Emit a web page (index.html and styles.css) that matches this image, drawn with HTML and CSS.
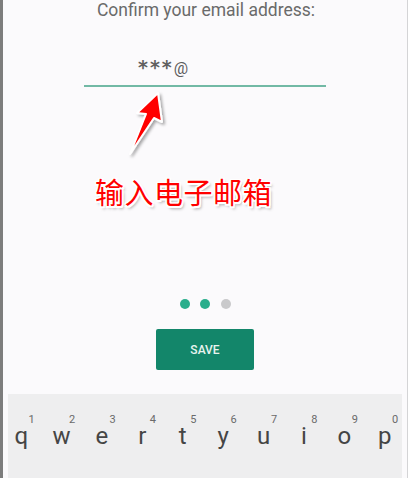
FILE: index.html
```html
<!DOCTYPE html>
<html lang="en">
<head>
<meta charset="utf-8">
<link rel="stylesheet" href="styles.css">
</head>
<body>
<div class="screen">
  <h1 class="title">Confirm your email address:</h1>
  <div class="field">
    <span class="field-text"><span class="stars">***</span>@</span>
  </div>
  <div class="spacer"></div>
  <div class="dots">
    <span class="dot on"></span>
    <span class="dot on"></span>
    <span class="dot"></span>
  </div>
  <button class="save">SAVE</button>
  <div class="keyboard">
    <div class="keyrow">
      <div class="key"><span class="num">1</span><span class="letter">q</span></div>
      <div class="key"><span class="num">2</span><span class="letter">w</span></div>
      <div class="key"><span class="num">3</span><span class="letter">e</span></div>
      <div class="key"><span class="num">4</span><span class="letter">r</span></div>
      <div class="key"><span class="num">5</span><span class="letter">t</span></div>
      <div class="key"><span class="num">6</span><span class="letter">y</span></div>
      <div class="key"><span class="num">7</span><span class="letter">u</span></div>
      <div class="key"><span class="num">8</span><span class="letter">i</span></div>
      <div class="key"><span class="num">9</span><span class="letter">o</span></div>
      <div class="key"><span class="num">0</span><span class="letter">p</span></div>
    </div>
  </div>

  <svg class="arrow" width="60" height="80" viewBox="120 88 60 80">
    <defs>
      <filter id="sh" x="-30%" y="-30%" width="160%" height="160%">
        <feDropShadow dx="2" dy="2" stdDeviation="1.5" flood-color="#000" flood-opacity="0.35"/>
      </filter>
    </defs>
    <polygon points="158,93 162,122 154,118 130,154 146,114 137,113" fill="#ff0000" stroke="#ffffff" stroke-width="2" stroke-linejoin="round" filter="url(#sh)"/>
  </svg>
  <div class="note">输入电子邮箱</div>
</div>
</body>
</html>
```

FILE: styles.css
```css
html, body {
  margin: 0;
  padding: 0;
  background: #fbfafc;
}

.screen {
  position: relative;
  width: 408px;
  height: 478px;
  box-sizing: border-box;
  border-left: 3px solid #7d7d7d;
  border-right: 1px solid #d4d4d6;
  display: flex;
  flex-direction: column;
  overflow: hidden;
  font-family: Roboto, "Liberation Sans", sans-serif;
}

.title {
  margin: 0;
  font-size: 17.5px;
  font-weight: 400;
  line-height: 20px;
  color: #6a6a6a;
  text-align: center;
  padding-left: 2px;
}

.field {
  margin: 33px 0 0 81px;
  width: 242px;
  height: 34px;
  border-bottom: 2px solid #72b9a5;
  box-sizing: border-box;
  padding: 2px 0 0 54px;
  display: flex;
  align-items: flex-start;
}

.field-text {
  font-size: 16px;
  line-height: 24px;
  color: #5c5c5c;
}

.stars {
  font-family: "DejaVu Sans", sans-serif;
  font-size: 19px;
  font-weight: 700;
  letter-spacing: 2px;
  color: #606060;
}

.spacer {
  height: 208px;
}

.dots {
  display: flex;
  justify-content: center;
  gap: 10.5px;
  margin-top: 4px;
}

.dot {
  width: 10px;
  height: 10px;
  border-radius: 50%;
  background: #c9c9cb;
}

.dot.on {
  background: #2aae8c;
}

.save {
  align-self: flex-start;
  margin: 20px 0 0 153px;
  width: 98px;
  height: 41px;
  border: none;
  border-radius: 2px;
  background: #13866a;
  color: #e8f3ef;
  font-family: Roboto, "Liberation Sans", sans-serif;
  font-size: 12px;
  font-weight: 500;
  padding: 0;
}

.keyboard {
  margin: 24px 5px 0 5px;
  flex: 1;
  background: #eeeeef;
  padding-top: 20px;
}

.keyrow {
  display: grid;
  grid-template-columns: repeat(10, 40.4px);
  margin-left: -7px;
}

.key {
  display: flex;
  flex-direction: column;
  align-items: center;
}

.num {
  font-size: 11px;
  line-height: 12px;
  color: #6a6a6a;
  padding-left: 21px;
}

.letter {
  font-size: 24px;
  line-height: 20px;
  color: #454545;
}

.arrow {
  position: absolute;
  left: 117px;
  top: 88px;
}

.note {
  position: absolute;
  left: 92px;
  top: 174px;
  font-family: "Noto Sans CJK SC", sans-serif;
  font-size: 29px;
  line-height: 34px;
  color: #ff0000;
  letter-spacing: 0.5px;
  text-shadow:
    -1.5px 0 0 #fff, 1.5px 0 0 #fff, 0 -1.5px 0 #fff, 0 1.5px 0 #fff,
    -1.5px -1.5px 0 #fff, 1.5px 1.5px 0 #fff, -1.5px 1.5px 0 #fff, 1.5px -1.5px 0 #fff,
    2px 3px 3px rgba(0,0,0,0.35);
}
```
